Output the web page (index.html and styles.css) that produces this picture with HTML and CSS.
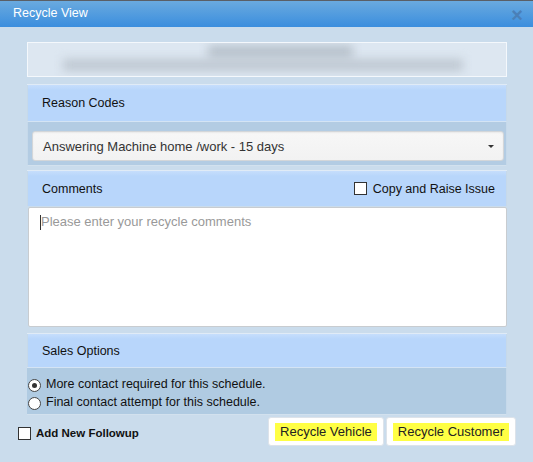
FILE: index.html
```html
<!DOCTYPE html>
<html>
<head>
<meta charset="utf-8">
<link rel="stylesheet" href="styles.css">
</head>
<body>
<div class="titlebar">
  <span class="title">Recycle View</span>
  <span class="close">×</span>
</div>
<div class="content">
  <div class="blurbox">
    <div class="blur1"></div>
    <div class="blur2"></div>
  </div>

  <section class="panel reason">
    <div class="phead">Reason Codes</div>
    <div class="pbody">
      <div class="select">
        <span>Answering Machine home /work - 15 days</span>
        <span class="caret"></span>
      </div>
    </div>
  </section>

  <section class="panel comments">
    <div class="phead">
      <span>Comments</span>
      <label class="chk"><span class="box"></span>Copy and Raise Issue</label>
    </div>
    <div class="textarea"><span class="cursor"></span><span class="ph">Please enter your recycle comments</span></div>
  </section>

  <section class="panel sales">
    <div class="phead">Sales Options</div>
    <div class="radios">
      <div class="radio"><span class="dot on"></span>More contact required for this schedule.</div>
      <div class="radio"><span class="dot"></span>Final contact attempt for this schedule.</div>
    </div>
  </section>
</div>
<div class="footer">
  <label class="follow"><span class="box"></span>Add New Followup</label>
  <div class="buttons">
    <button class="btn"><span class="hl">Recycle Vehicle</span></button>
    <button class="btn"><span class="hl">Recycle Customer</span></button>
  </div>
</div>
</body>
</html>
```

FILE: styles.css
```css
*, *::before, *::after {
  box-sizing: border-box;
}
html, body {
  margin: 0;
  padding: 0;
}
body {
  width: 533px;
  height: 462px;
  overflow: hidden;
  background: #cadcec;
  font-family: "Liberation Sans", Arial, sans-serif;
  color: #111;
}
.titlebar {
  height: 27px;
  border-top: 1px solid #5a5f66;
  background: linear-gradient(#6aaadf, #3b8ede);
  display: flex;
  align-items: center;
  justify-content: space-between;
  padding: 0 10px 0 13px;
}
.title {
  color: #fff;
  font-size: 12.5px;
  margin-top: -3px;
}
.close {
  color: #4a80b8;
  font-size: 20px;
  font-weight: bold;
  margin-top: 2px;
}
.content {
  padding: 15px 26px 0 27px;
}
.blurbox {
  height: 35px;
  border: 1px solid #f4f8fc;
  background: #dde7f1;
  position: relative;
  overflow: hidden;
}
.blur1 {
  position: absolute;
  left: 180px;
  top: 2px;
  width: 145px;
  height: 14px;
  background: #b9c3cd;
  filter: blur(5px);
}
.blur2 {
  position: absolute;
  left: 35px;
  top: 16px;
  width: 400px;
  height: 12px;
  background: #bfc8d2;
  filter: blur(5px);
}
.panel {
  border-top: 1px solid #e0ebf6;
}
.phead {
  background: linear-gradient(#c6defc, #b8d6fb 5px);
  font-size: 12.5px;
  padding: 0 14px;
  display: flex;
  align-items: center;
  justify-content: space-between;
  border-left: 1px solid #c6d9ea;
  border-right: 1px solid #c6d9ea;
}
.reason {
  margin-top: 7px;
}
.reason .phead {
  height: 36px;
}
.pbody {
  border-top: 1px solid #d4e4f4;
  background: #b3cce3;
  padding: 9px 2px 4px 4px;
  border-left: 1px solid #c6d9ea;
  border-right: 1px solid #c6d9ea;
  border-bottom: 1px solid #d2e1ee;
}
.select {
  height: 30px;
  border: 1px solid #d3d6d9;
  border-radius: 3px;
  background: linear-gradient(#f7f7f7, #f2f2f2);
  box-shadow: inset 0 1px 2px rgba(0,0,0,0.06);
  display: flex;
  align-items: center;
  justify-content: space-between;
  padding: 0 9px 0 10px;
  font-size: 13px;
  color: #333;
}
.caret {
  width: 0;
  height: 0;
  border-left: 3px solid transparent;
  border-right: 3px solid transparent;
  border-top: 3px solid #333;
}
.comments {
  margin-top: 4px;
}
.comments .phead {
  height: 35px;
}
.chk {
  display: flex;
  align-items: center;
  font-size: 12.5px;
  margin-right: -3px;
}
.box {
  width: 13px;
  height: 13px;
  border: 1px solid #333;
  background: #fff;
  margin-right: 6px;
  display: inline-block;
}
.textarea {
  height: 120px;
  background: #fff;
  border: 1px solid #c8ccd0;
  border-radius: 2px;
  margin: 1px 0 0 1px;
  padding: 6px 11px;
  font-size: 13px;
  display: flex;
  align-items: flex-start;
}
.cursor {
  width: 1px;
  height: 15px;
  background: #333;
  margin-top: 1px;
}
.ph {
  color: #999;
}
.sales {
  margin-top: 6px;
}
.sales .phead {
  height: 33px;
}
.radios {
  background: #b0cbe2;
  border-top: 1px solid #d4e4f4;
  border-right: 1px solid #c6d9ea;
  border-bottom: 1px solid #d2e1ee;
  padding: 7px 0 3px 1px;
  font-size: 12.5px;
}
.radio {
  display: flex;
  align-items: center;
  height: 18px;
}
.dot {
  width: 13px;
  height: 13px;
  border: 1px solid #444;
  border-radius: 50%;
  background: #fff;
  margin-right: 5px;
  margin-top: 2px;
  position: relative;
}
.dot.on::after {
  content: "";
  position: absolute;
  left: 3px;
  top: 3px;
  width: 5px;
  height: 5px;
  border-radius: 50%;
  background: #333;
}
.footer {
  display: flex;
  justify-content: space-between;
  align-items: center;
  padding: 2px 17px 0 18px;
}
.follow {
  display: flex;
  align-items: center;
  font-size: 11.5px;
  font-weight: bold;
  margin-top: 3px;
}
.follow .box {
  margin-right: 5px;
}
.buttons {
  display: flex;
  gap: 2px;
}
.btn {
  height: 29px;
  background: #fff;
  border: 1px solid #dde3ea;
  border-radius: 3px;
  padding: 0 6px;
  font-family: "Liberation Sans", Arial, sans-serif;
  font-size: 13px;
  color: #222;
  display: flex;
  align-items: center;
}
.hl {
  background: #ffff44;
  padding: 1px 5px;
  line-height: 16px;
}
```
